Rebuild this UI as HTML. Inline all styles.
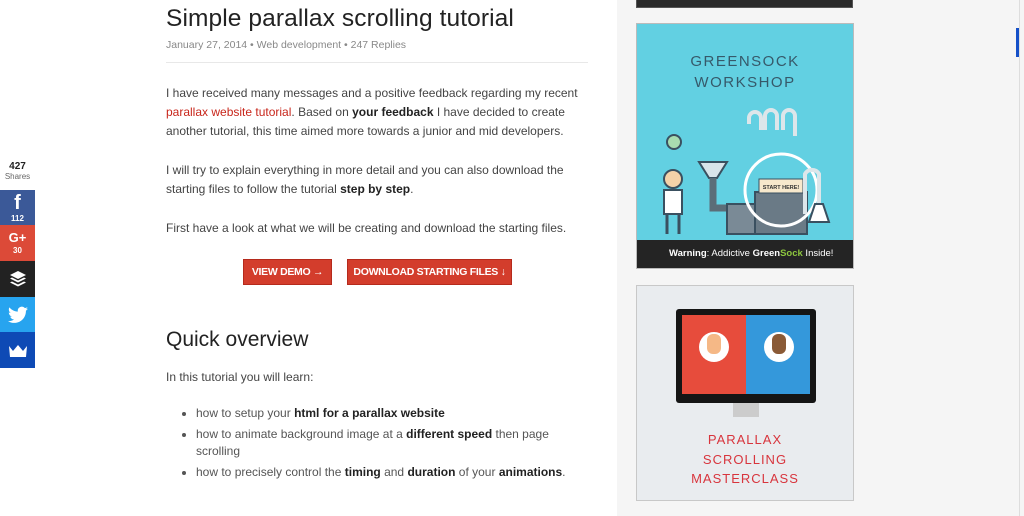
<!DOCTYPE html>
<html><head><style>
*{margin:0;padding:0;box-sizing:border-box}
body{width:1024px;height:516px;overflow:hidden;background:#fff;font-family:"Liberation Sans",sans-serif;position:relative;color:#444}
.abs{position:absolute}
p{font-size:12px;line-height:19px;color:#444;white-space:nowrap}
b{color:#222}
.btn{position:absolute;background:#d33d2c;border:1px solid #b52a1c;color:#fff;font-size:10.5px;font-weight:bold;text-align:center;line-height:24px;letter-spacing:-0.3px}
li{font-size:12px;line-height:17px;color:#555;margin-left:30px;margin-bottom:4px}
.sb{position:absolute;left:0;width:35px;color:#fff;text-align:center}
</style></head><body>
<div class="abs" style="left:617px;top:0;width:407px;height:516px;background:#f5f5f5"></div>
<div class="abs" style="left:1019px;top:0;width:1px;height:516px;background:#ddd"></div>
<div class="abs" style="left:1016px;top:28px;width:3px;height:29px;background:#1550c8"></div>

<div class="abs" style="left:166px;top:5px;font-size:24.5px;color:#222;letter-spacing:0.1px">Simple parallax scrolling tutorial</div>
<div class="abs" style="left:166px;top:39px;font-size:10.5px;color:#888">January 27, 2014 • Web development • 247 Replies</div>
<div class="abs" style="left:166px;top:62px;width:422px;height:1px;background:#e8e8e8"></div>

<div class="abs" style="left:166px;top:84px;width:425px">
<p>I have received many messages and a positive feedback regarding my recent<br><span style="color:#c8261b">parallax website tutorial</span>. Based on <b>your feedback</b> I have decided to create<br>another tutorial, this time aimed more towards a junior and mid developers.</p>
<p style="margin-top:20px">I will try to explain everything in more detail and you can also download the<br>starting files to follow the tutorial <b>step by step</b>.</p>
<p style="margin-top:20px">First have a look at what we will be creating and download the starting files.</p>
</div>
<div class="btn" style="left:243px;top:259px;width:89px;height:26px">VIEW DEMO →</div>
<div class="btn" style="left:347px;top:259px;width:165px;height:26px">DOWNLOAD STARTING FILES ↓</div>

<div class="abs" style="left:166px;top:328px;font-size:21px;color:#222">Quick overview</div>
<div class="abs" style="left:166px;top:368px"><p>In this tutorial you will learn:</p></div>
<ul class="abs" style="left:166px;top:405px;width:420px">
<li>how to setup your <b>html for a parallax website</b></li>
<li>how to animate background image at a <b>different speed</b> then page<br>scrolling</li>
<li>how to precisely control the <b>timing</b> and <b>duration</b> of your <b>animations</b>.</li>
</ul>

<div class="abs" style="left:0;top:161px;width:35px;text-align:center;font-size:10px;font-weight:bold;color:#222">427</div>
<div class="abs" style="left:0;top:172px;width:35px;text-align:center;font-size:8px;color:#666">Shares</div>
<div class="sb" style="top:190px;height:35px;background:#3b5998"><div style="font-size:20px;font-weight:bold;line-height:22px;margin-top:2px">f</div><div style="font-size:8px;font-weight:bold">112</div></div>
<div class="sb" style="top:225px;height:36px;background:#dc4a38"><div style="font-size:13px;font-weight:bold;line-height:16px;margin-top:5px">G+</div><div style="font-size:8px;font-weight:bold">30</div></div>
<div class="sb" style="top:261px;height:36px;background:#222"><svg width="20" height="20" style="margin-top:8px" viewBox="0 0 20 20" fill="#fff"><path d="M10 2l8 4-8 4-8-4z"/><path d="M2 9.5l2-1 6 3 6-3 2 1-8 4z"/><path d="M2 13.5l2-1 6 3 6-3 2 1-8 4z"/></svg></div>
<div class="sb" style="top:297px;height:35px;background:#27a4ef"><svg width="20" height="18" style="margin-top:9px" viewBox="0 0 24 20" fill="#fff"><path d="M24 2.4c-.9.4-1.8.7-2.8.8 1-.6 1.8-1.6 2.2-2.7-1 .6-2 1-3.1 1.2C19.3.7 18 0 16.6 0c-2.7 0-4.9 2.2-4.9 4.9 0 .4 0 .8.1 1.1C7.7 5.8 4.1 3.9 1.7.9c-.4.7-.7 1.6-.7 2.5 0 1.7.9 3.2 2.2 4.1-.8 0-1.6-.2-2.2-.6v.1c0 2.4 1.7 4.4 3.9 4.8-.4.1-.8.2-1.3.2-.3 0-.6 0-.9-.1.6 2 2.4 3.4 4.6 3.4-1.7 1.3-3.8 2.1-6.1 2.1-.4 0-.8 0-1.2-.1 2.2 1.4 4.8 2.2 7.5 2.2 9.1 0 14-7.5 14-14v-.6c1-.7 1.8-1.6 2.5-2.5z"/></svg></div>
<div class="sb" style="top:332px;height:36px;background:#0e4ab5"><svg width="20" height="14" style="margin-top:12px" viewBox="0 0 20 14" fill="#fff"><path d="M1 2l4 5 5-6 5 6 4-5-1 11H2z"/></svg></div>

<div class="abs" style="left:636px;top:0;width:217px;height:8px;background:#2a2a2a;border:1px solid #555;border-top:none"></div>

<div class="abs" style="left:636px;top:23px;width:218px;height:246px;background:#62d0e2;border:1px solid #bbb">
 <div style="position:absolute;top:27px;width:100%;text-align:center;color:#36596a;font-size:15px;letter-spacing:1.5px;line-height:21px">GREENSOCK<br>WORKSHOP</div>
 <svg class="abs" style="left:0;top:80px" width="216" height="140" viewBox="0 0 216 140">
  <circle cx="37" cy="38" r="7" fill="#a8dcb0" stroke="#3a5060" stroke-width="2"/>
  <circle cx="36" cy="75" r="9" fill="#f4d2a8" stroke="#3a5060" stroke-width="2"/>
  <rect x="27" y="86" width="18" height="24" fill="#fff" stroke="#3a5060" stroke-width="2"/>
  <path d="M30 110v20M42 110v20" stroke="#3a5060" stroke-width="3"/>
  <path d="M62 58h28l-10 16h-8z" fill="#d8e4ea" stroke="#3a5060" stroke-width="2"/>
  <path d="M76 74v30h16" fill="none" stroke="#5b6d78" stroke-width="7"/>
  <rect x="90" y="100" width="36" height="30" fill="#7a8a96" stroke="#3a5060" stroke-width="2"/>
  <path d="M112 20v-6a6 6 0 0 1 12 0v12M128 26v-14a6 6 0 0 1 12 0v14M146 26v-14a6 6 0 0 1 12 0v20" fill="none" stroke="#dde6ea" stroke-width="4"/>
  <rect x="118" y="88" width="52" height="42" fill="#6a7a86" stroke="#3a5060" stroke-width="2"/>
  <rect x="122" y="75" width="44" height="14" fill="#f7e8cc" stroke="#3a5060"/>
  <text x="144" y="85" font-size="5.5" font-weight="bold" text-anchor="middle" fill="#333" font-family="Liberation Sans">START HERE!</text>
  <circle cx="144" cy="86" r="36" fill="none" stroke="#fff" stroke-width="3"/>
  <path d="M168 110v-40a8 8 0 0 1 14 0v30" fill="none" stroke="#dde6ea" stroke-width="4"/>
  <path d="M178 100l-6 18h20l-6-18z" fill="#fff" stroke="#3a5060" stroke-width="2"/>
 </svg>
 <div style="position:absolute;left:0;bottom:0;width:100%;height:28px;background:#242424;color:#fff;font-size:9.5px;line-height:28px;padding-left:32px"><b style="color:#fff">Warning</b>: Addictive <b style="color:#fff">Green</b><b style="color:#8dc63f">Sock</b> Inside!</div>
</div>

<div class="abs" style="left:636px;top:285px;width:218px;height:216px;background:#e9ecef;border:1px solid #c8c8c8">
 <div class="abs" style="left:39px;top:23px;width:140px;height:94px;background:#151515;border-radius:3px"></div>
 <div class="abs" style="left:45px;top:29px;width:64px;height:79px;background:#e74c3c"></div>
 <div class="abs" style="left:109px;top:29px;width:64px;height:79px;background:#3498db"></div>
 <div class="abs" style="left:62px;top:46px;width:30px;height:30px;border-radius:50%;background:#fff"></div>
 <div class="abs" style="left:127px;top:46px;width:30px;height:30px;border-radius:50%;background:#fff"></div>
 <div class="abs" style="left:70px;top:48px;width:14px;height:20px;border-radius:6px;background:#f5b886"></div>
 <div class="abs" style="left:135px;top:48px;width:14px;height:20px;border-radius:6px;background:#8a5a36"></div>
 <div class="abs" style="left:96px;top:117px;width:26px;height:14px;background:#ccc"></div>
 <div style="position:absolute;top:144px;width:100%;text-align:center;color:#d8353d;font-size:13px;letter-spacing:1px;line-height:19.5px">PARALLAX<br>SCROLLING<br>MASTERCLASS</div>
</div>
</body></html>
